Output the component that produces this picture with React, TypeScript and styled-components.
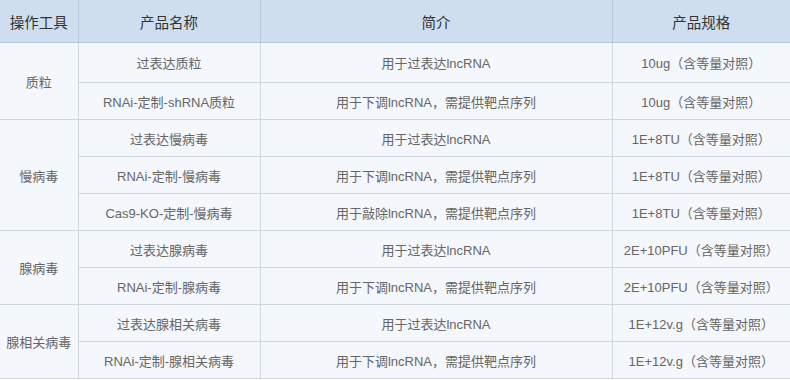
import React from "react";
import styled, { createGlobalStyle } from "styled-components";

const Global = createGlobalStyle`
  html, body { margin: 0; padding: 0; background: #ffffff; }
  body { font-family: "Liberation Sans", "Noto Sans CJK SC", sans-serif; }
`;

const Table = styled.table`
  width: 790px;
  border-collapse: collapse;
  table-layout: fixed;
  background: #f4f7fb;
  color: #666666;
  font-size: 13px;
`;

const Col = styled.col<{ $w: number }>`
  width: ${(p) => p.$w}px;
`;

const HeadCell = styled.th`
  height: 42px;
  padding: 0;
  background: #cfdeee;
  color: #333333;
  font-family: "Noto Sans CJK SC", sans-serif;
  font-size: 14.5px;
  font-weight: 400;
  text-align: center;
  border-left: 1px solid #b9c8d8;
  border-bottom: 1px solid #b3c3d4;
  &:first-child { border-left: none; }
`;

const Row = styled.tr`
  height: 37px;
  &:first-child { height: 40px; }
`;

const Cell = styled.td`
  padding: 0;
  text-align: center;
  vertical-align: middle;
  border-left: 1px solid #cfd6df;
  border-bottom: 1px solid #cfd6df;
  white-space: nowrap;
`;

const GroupCell = styled(Cell)`
  border-left: none;
`;

type Item = { name: string; desc: string; spec: string };
type Group = { tool: string; items: Item[] };

const OVER = "用于过表达lncRNA";
const DOWN = "用于下调lncRNA，需提供靶点序列";
const KNOCK = "用于敲除lncRNA，需提供靶点序列";

const groups: Group[] = [
  {
    tool: "质粒",
    items: [
      { name: "过表达质粒", desc: OVER, spec: "10ug（含等量对照）" },
      { name: "RNAi-定制-shRNA质粒", desc: DOWN, spec: "10ug（含等量对照）" },
    ],
  },
  {
    tool: "慢病毒",
    items: [
      { name: "过表达慢病毒", desc: OVER, spec: "1E+8TU（含等量对照）" },
      { name: "RNAi-定制-慢病毒", desc: DOWN, spec: "1E+8TU（含等量对照）" },
      { name: "Cas9-KO-定制-慢病毒", desc: KNOCK, spec: "1E+8TU（含等量对照）" },
    ],
  },
  {
    tool: "腺病毒",
    items: [
      { name: "过表达腺病毒", desc: OVER, spec: "2E+10PFU（含等量对照）" },
      { name: "RNAi-定制-腺病毒", desc: DOWN, spec: "2E+10PFU（含等量对照）" },
    ],
  },
  {
    tool: "腺相关病毒",
    items: [
      { name: "过表达腺相关病毒", desc: OVER, spec: "1E+12v.g（含等量对照）" },
      { name: "RNAi-定制-腺相关病毒", desc: DOWN, spec: "1E+12v.g（含等量对照）" },
    ],
  },
];

export default function App() {
  return (
    <>
      <Global />
      <Table>
        <colgroup>
          <Col $w={78} />
          <Col $w={182} />
          <Col $w={352} />
          <Col $w={178} />
        </colgroup>
        <thead>
          <tr>
            <HeadCell>操作工具</HeadCell>
            <HeadCell>产品名称</HeadCell>
            <HeadCell>简介</HeadCell>
            <HeadCell>产品规格</HeadCell>
          </tr>
        </thead>
        <tbody>
          {groups.flatMap((g) =>
            g.items.map((it, i) => (
              <Row key={g.tool + i}>
                {i === 0 && <GroupCell rowSpan={g.items.length}>{g.tool}</GroupCell>}
                <Cell>{it.name}</Cell>
                <Cell>{it.desc}</Cell>
                <Cell>{it.spec}</Cell>
              </Row>
            ))
          )}
        </tbody>
      </Table>
    </>
  );
}
